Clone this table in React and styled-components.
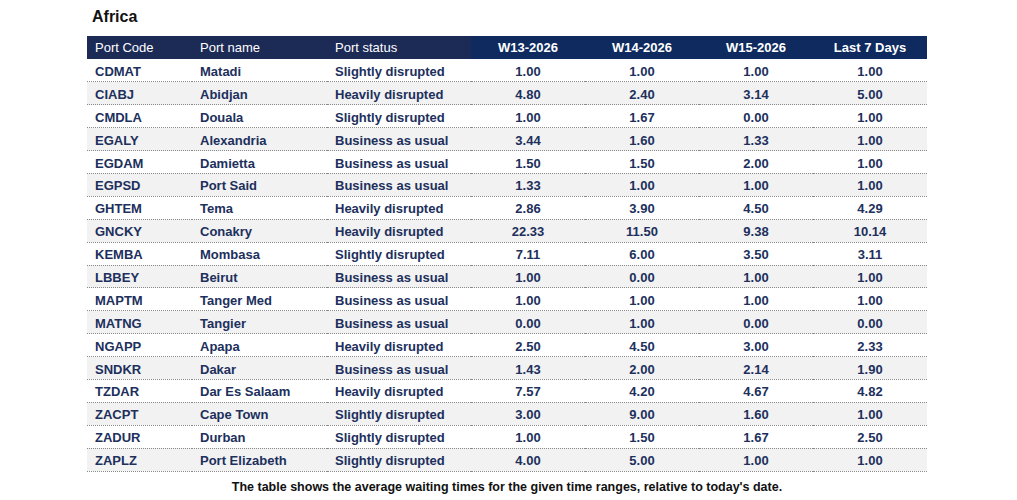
import React from "react";
import styled, { createGlobalStyle } from "styled-components";

const GlobalStyle = createGlobalStyle`
  body {
    margin: 0;
    background: #ffffff;
    font-family: "Liberation Sans", Arial, sans-serif;
  }
`;

const Page = styled.div`
  width: 1017px;
  height: 500px;
  padding: 8px 0 0 87px;
  box-sizing: border-box;
`;

const Title = styled.h2`
  margin: 0 0 10px 5px;
  font-size: 16px;
  line-height: 18px;
  font-weight: bold;
  color: #111111;
`;

const Table = styled.table`
  width: 840px;
  border-collapse: collapse;
  table-layout: fixed;
  font-size: 13px;
`;

const HeadCell = styled.th`
  height: 23px;
  padding: 0 0 0 ${(p) => (p.$num ? 0 : 8)}px;
  text-align: ${(p) => (p.$num ? "center" : "left")};
  font-weight: ${(p) => (p.$num ? "bold" : "normal")};
  color: #ffffff;
  background: ${(p) => (p.$num ? "#0e2a5f" : "#1c2a56")};
  white-space: nowrap;
`;

const Row = styled.tr`
  height: 22.9px;
  background: ${(p) => (p.$alt ? "#f2f2f2" : "#ffffff")};
  border-bottom: 1px dotted #8a8a8a;
`;

const Cell = styled.td`
  padding: 2px 0 0 ${(p) => (p.$num ? 0 : 8)}px;
  text-align: ${(p) => (p.$num ? "center" : "left")};
  font-weight: bold;
  color: #202f5c;
  white-space: nowrap;
`;

const Caption = styled.p`
  width: 840px;
  margin: 8px 0 0;
  text-align: center;
  font-size: 12.5px;
  font-weight: bold;
  color: #111111;
`;

const columns = [
  { label: "Port Code", width: 105 },
  { label: "Port name", width: 135 },
  { label: "Port status", width: 144 },
  { label: "W13-2026", width: 114, num: true },
  { label: "W14-2026", width: 114, num: true },
  { label: "W15-2026", width: 114, num: true },
  { label: "Last 7 Days", width: 114, num: true },
];

const rows = [
  ["CDMAT", "Matadi", "Slightly disrupted", "1.00", "1.00", "1.00", "1.00"],
  ["CIABJ", "Abidjan", "Heavily disrupted", "4.80", "2.40", "3.14", "5.00"],
  ["CMDLA", "Douala", "Slightly disrupted", "1.00", "1.67", "0.00", "1.00"],
  ["EGALY", "Alexandria", "Business as usual", "3.44", "1.60", "1.33", "1.00"],
  ["EGDAM", "Damietta", "Business as usual", "1.50", "1.50", "2.00", "1.00"],
  ["EGPSD", "Port Said", "Business as usual", "1.33", "1.00", "1.00", "1.00"],
  ["GHTEM", "Tema", "Heavily disrupted", "2.86", "3.90", "4.50", "4.29"],
  ["GNCKY", "Conakry", "Heavily disrupted", "22.33", "11.50", "9.38", "10.14"],
  ["KEMBA", "Mombasa", "Slightly disrupted", "7.11", "6.00", "3.50", "3.11"],
  ["LBBEY", "Beirut", "Business as usual", "1.00", "0.00", "1.00", "1.00"],
  ["MAPTM", "Tanger Med", "Business as usual", "1.00", "1.00", "1.00", "1.00"],
  ["MATNG", "Tangier", "Business as usual", "0.00", "1.00", "0.00", "0.00"],
  ["NGAPP", "Apapa", "Heavily disrupted", "2.50", "4.50", "3.00", "2.33"],
  ["SNDKR", "Dakar", "Business as usual", "1.43", "2.00", "2.14", "1.90"],
  ["TZDAR", "Dar Es Salaam", "Heavily disrupted", "7.57", "4.20", "4.67", "4.82"],
  ["ZACPT", "Cape Town", "Slightly disrupted", "3.00", "9.00", "1.60", "1.00"],
  ["ZADUR", "Durban", "Slightly disrupted", "1.00", "1.50", "1.67", "2.50"],
  ["ZAPLZ", "Port Elizabeth", "Slightly disrupted", "4.00", "5.00", "1.00", "1.00"],
];

function App() {
  return (
    <Page>
      <GlobalStyle />
      <Title>Africa</Title>
      <Table>
        <colgroup>
          {columns.map((c) => (
            <col key={c.label} style={{ width: c.width }} />
          ))}
        </colgroup>
        <thead>
          <tr>
            {columns.map((c) => (
              <HeadCell key={c.label} $num={c.num}>
                {c.label}
              </HeadCell>
            ))}
          </tr>
        </thead>
        <tbody>
          {rows.map((r, i) => (
            <Row key={r[0]} $alt={i % 2 === 1}>
              {r.map((v, j) => (
                <Cell key={j} $num={j > 2}>
                  {v}
                </Cell>
              ))}
            </Row>
          ))}
        </tbody>
      </Table>
      <Caption>
        The table shows the average waiting times for the given time ranges, relative to today's date.
      </Caption>
    </Page>
  );
}

export default App;
